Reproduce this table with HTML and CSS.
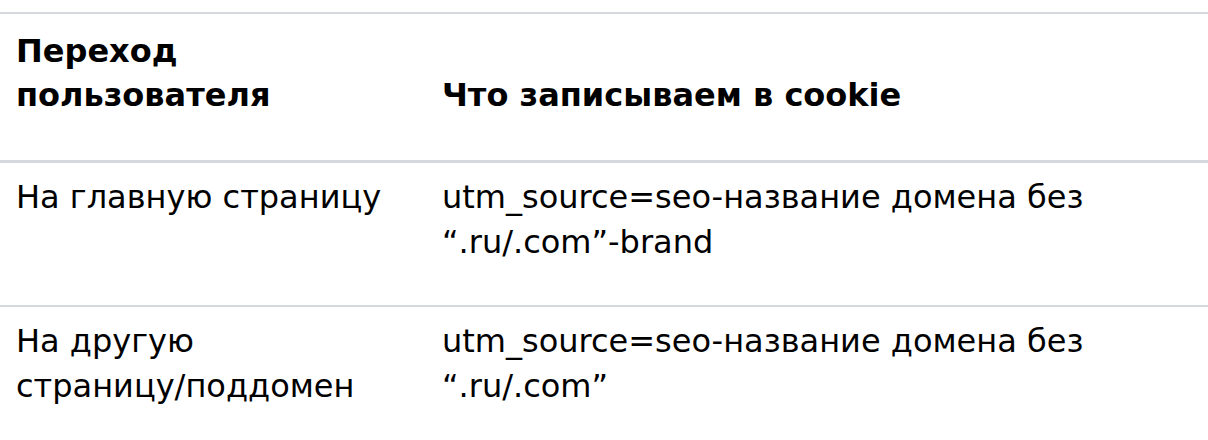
FILE: index.html
```html
<!DOCTYPE html>
<html lang="ru">
<head>
<meta charset="utf-8">
<title>Таблица</title>
<link rel="stylesheet" href="styles.css">
</head>
<body>
<table class="utm-table">
  <thead>
    <tr>
      <th class="col-a">Переход пользователя</th>
      <th class="col-b">Что записываем в cookie</th>
    </tr>
  </thead>
  <tbody>
    <tr>
      <td class="col-a">На главную страницу</td>
      <td class="col-b">utm_source=seo-название домена без “.ru/.com”-brand</td>
    </tr>
    <tr>
      <td class="col-a">На другую <span class="nowrap">страницу/поддомен</span></td>
      <td class="col-b">utm_source=seo-название домена без “.ru/.com”</td>
    </tr>
  </tbody>
</table>
</body>
</html>
```

FILE: styles.css
```css
html, body {
  margin: 0;
  padding: 0;
  background: #ffffff;
}

body {
  padding-top: 12px;
  font-family: "DejaVu Sans", Verdana, sans-serif;
  font-size: 32px;
  line-height: 45px;
  color: #000000;
}

.utm-table {
  width: 100%;
  border-collapse: collapse;
  border-top: 2px solid #d5d9dd;
}

.utm-table th,
.utm-table td {
  text-align: left;
  padding: 0 16px;
}

.utm-table .col-a {
  width: 394px;
}

.utm-table th {
  font-weight: bold;
  line-height: 44px;
  vertical-align: bottom;
  padding-top: 15px;
  padding-bottom: 43px;
  border-bottom: 3px solid #d5d9dd;
}

.utm-table td {
  font-weight: normal;
  vertical-align: top;
  padding-top: 12px;
  padding-bottom: 40px;
}

.utm-table tbody tr + tr td {
  border-top: 2px solid #d5d9dd;
}

.nowrap {
  white-space: nowrap;
}
```
